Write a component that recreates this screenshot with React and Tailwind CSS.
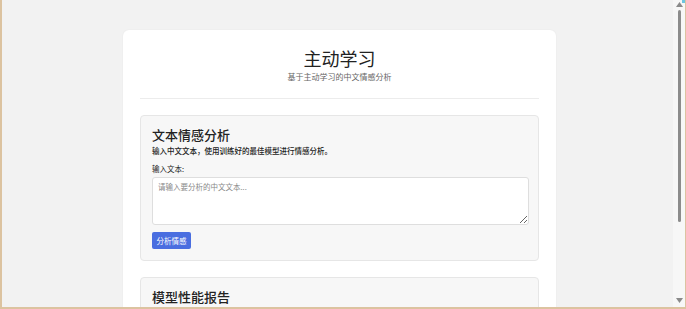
export default function App() {
  const font = { fontFamily: '"Noto Sans CJK SC", "Noto Sans", sans-serif' };
  return (
    <div className="w-[686px] h-[309px] overflow-hidden flex flex-col bg-[#f1f1f1]" style={font}>
      <div className="flex flex-1 min-h-0">
        <div className="w-[2px] bg-[#dcc3a0]" />
        <div className="flex-1 min-w-0 overflow-hidden bg-[#f2f2f2]">
          <div className="ml-[121px] mt-[30px] w-[433px] bg-white rounded-[6px] px-[17px] pt-[16px] pb-4 shadow-[0_0_2px_rgba(0,0,0,0.06)]">
            <div className="text-center">
              <h1 className="text-[18px] leading-[24px] text-[#222]">主动学习</h1>
              <p className="text-[8px] leading-[12px] text-[#666] mt-[1px]">基于主动学习的中文情感分析</p>
            </div>
            <div className="mt-[15px] border-t border-[#ececec]" />
            <div className="mt-[16px] rounded-[4px] border border-[#e6e6e6] bg-[#f7f7f7] px-[11px] pt-[10px] pb-[11px]">
              <h2 className="text-[13px] leading-[18px] text-[#222] font-medium">文本情感分析</h2>
              <p className="text-[7.5px] leading-[12px] text-[#222] mt-[1px] font-medium">输入中文文本，使用训练好的最佳模型进行情感分析。</p>
              <p className="text-[7.5px] leading-[12px] text-[#222] mt-[6px]">输入文本:</p>
              <textarea
                className="mt-[2px] block w-[377px] h-[48px] rounded-[3px] border border-[#dedede] bg-white px-[5px] py-[3px] text-[7.5px] leading-[12px] placeholder:text-[#888] outline-none"
                placeholder="请输入要分析的中文文本..."
              />
              <button className="mt-[6px] h-[17px] w-[39px] rounded-[2px] bg-[#4a6ee0] text-white text-[7.5px] leading-[17px]">分析情感</button>
            </div>
            <div className="mt-[16px] rounded-[4px] border border-[#e6e6e6] bg-[#f7f7f7] px-[11px] pt-[10px] pb-[11px]">
              <h2 className="text-[13px] leading-[18px] text-[#222] font-medium">模型性能报告</h2>
              <p className="text-[7.5px] leading-[12px] text-[#222] mt-[4px]">&nbsp;</p>
            </div>
          </div>
        </div>
        <div className="w-[12px] bg-[#f7f7f7] flex flex-col items-center relative">
          <svg width="7" height="5" viewBox="0 0 7 5" className="mt-[2px]"><path d="M3.5 0 L7 5 L0 5 Z" fill="#8a8a8a" /></svg>
          <div className="mt-[3px] w-[3px] h-[212px] rounded-full bg-[#8c8c8c]" />
          <div className="flex-1" />
          <svg width="7" height="5" viewBox="0 0 7 5" className="mb-[4px]"><path d="M0 0 L7 0 L3.5 5 Z" fill="#8a8a8a" /></svg>
          <div className="absolute right-0 top-0 w-[3px] h-[3px] bg-[#6cc6e0]" />
        </div>
        <div className="w-[1px] bg-[#dcc3a0]" />
      </div>
      <div className="h-[2px] bg-[#dcc3a0]" />
    </div>
  );
}
